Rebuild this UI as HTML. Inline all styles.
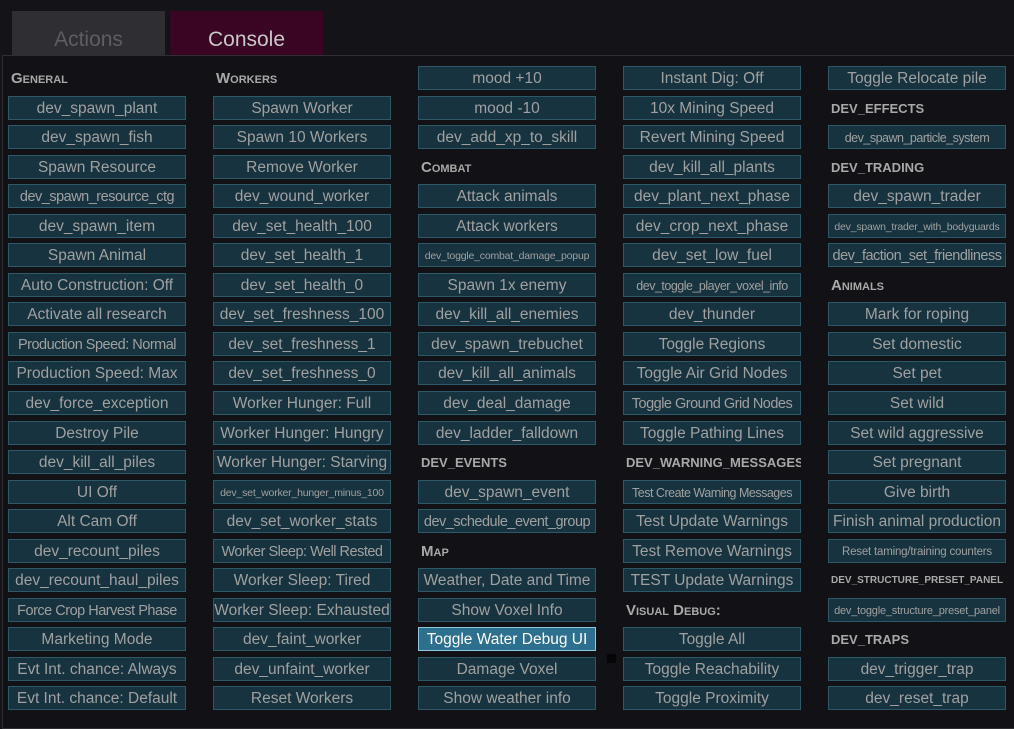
<!DOCTYPE html>
<html><head><meta charset="utf-8"><style>
body{margin:0;width:1014px;height:727px;background:#141418;font-family:"Liberation Sans",sans-serif;overflow:hidden;position:relative}
.tab{position:absolute;top:11px;height:45px;width:153px;text-align:center;font-size:21px;line-height:57px}
.t1{left:12px;background:#2f2f33;color:#5e5e62}
.t2{left:170px;background:#3a0522;color:#c8c8c8}
.panel{position:absolute;left:2px;top:55px;right:-2px;bottom:-2px;border:1px solid #2e2e33;background:#121216}
.grid{position:absolute;left:8px;top:66px;display:grid;grid-template-columns:repeat(5,178px);column-gap:27px;grid-template-rows:repeat(22,24px);row-gap:5.55px;grid-auto-flow:column}
.b{box-sizing:border-box;background:#17333f;border:1px solid #2c5868;color:#a0a0a0;font-size:15.5px;line-height:24px;text-align:center;white-space:nowrap;overflow:hidden}
.s{font-size:14.5px;letter-spacing:-0.5px}.t{font-size:10.5px;letter-spacing:-0.2px}
.h{color:#a8a8a8;font-weight:bold;font-size:15px;line-height:26px;padding-left:3px;font-variant:small-caps;white-space:nowrap;overflow:hidden}
.hs{font-size:13px}
.sel{background:#2c6f8e;border-color:#8cc8e0;color:#fff}
.sq{position:absolute;left:607px;top:654px;width:9px;height:9px;background:#050507}
</style></head><body>
<div class="tab t1">Actions</div><div class="tab t2">Console</div>
<div class="panel"></div>
<div class="sq"></div>
<div class="grid">
<div class="h">General</div>
<div class="b">dev_spawn_plant</div>
<div class="b">dev_spawn_fish</div>
<div class="b">Spawn Resource</div>
<div class="b s">dev_spawn_resource_ctg</div>
<div class="b">dev_spawn_item</div>
<div class="b">Spawn Animal</div>
<div class="b">Auto Construction: Off</div>
<div class="b">Activate all research</div>
<div class="b s">Production Speed: Normal</div>
<div class="b">Production Speed: Max</div>
<div class="b">dev_force_exception</div>
<div class="b">Destroy Pile</div>
<div class="b">dev_kill_all_piles</div>
<div class="b">UI Off</div>
<div class="b">Alt Cam Off</div>
<div class="b">dev_recount_piles</div>
<div class="b">dev_recount_haul_piles</div>
<div class="b s">Force Crop Harvest Phase</div>
<div class="b">Marketing Mode</div>
<div class="b">Evt Int. chance: Always</div>
<div class="b">Evt Int. chance: Default</div>

<div class="h">Workers</div>
<div class="b">Spawn Worker</div>
<div class="b">Spawn 10 Workers</div>
<div class="b">Remove Worker</div>
<div class="b">dev_wound_worker</div>
<div class="b">dev_set_health_100</div>
<div class="b">dev_set_health_1</div>
<div class="b">dev_set_health_0</div>
<div class="b">dev_set_freshness_100</div>
<div class="b">dev_set_freshness_1</div>
<div class="b">dev_set_freshness_0</div>
<div class="b">Worker Hunger: Full</div>
<div class="b">Worker Hunger: Hungry</div>
<div class="b">Worker Hunger: Starving</div>
<div class="b t">dev_set_worker_hunger_minus_100</div>
<div class="b">dev_set_worker_stats</div>
<div class="b s">Worker Sleep: Well Rested</div>
<div class="b">Worker Sleep: Tired</div>
<div class="b">Worker Sleep: Exhausted</div>
<div class="b">dev_faint_worker</div>
<div class="b">dev_unfaint_worker</div>
<div class="b">Reset Workers</div>

<div class="b">mood +10</div>
<div class="b">mood -10</div>
<div class="b">dev_add_xp_to_skill</div>
<div class="h">Combat</div>
<div class="b">Attack animals</div>
<div class="b">Attack workers</div>
<div class="b t">dev_toggle_combat_damage_popup</div>
<div class="b">Spawn 1x enemy</div>
<div class="b">dev_kill_all_enemies</div>
<div class="b">dev_spawn_trebuchet</div>
<div class="b">dev_kill_all_animals</div>
<div class="b">dev_deal_damage</div>
<div class="b">dev_ladder_falldown</div>
<div class="h hs">DEV_EVENTS</div>
<div class="b">dev_spawn_event</div>
<div class="b s">dev_schedule_event_group</div>
<div class="h">Map</div>
<div class="b">Weather, Date and Time</div>
<div class="b">Show Voxel Info</div>
<div class="b sel">Toggle Water Debug UI</div>
<div class="b">Damage Voxel</div>
<div class="b">Show weather info</div>

<div class="b">Instant Dig: Off</div>
<div class="b">10x Mining Speed</div>
<div class="b">Revert Mining Speed</div>
<div class="b">dev_kill_all_plants</div>
<div class="b">dev_plant_next_phase</div>
<div class="b">dev_crop_next_phase</div>
<div class="b">dev_set_low_fuel</div>
<div class="b s" style="font-size:12.5px">dev_toggle_player_voxel_info</div>
<div class="b">dev_thunder</div>
<div class="b">Toggle Regions</div>
<div class="b">Toggle Air Grid Nodes</div>
<div class="b s">Toggle Ground Grid Nodes</div>
<div class="b">Toggle Pathing Lines</div>
<div class="h hs">DEV_WARNING_MESSAGES</div>
<div class="b s" style="font-size:12.5px">Test Create Warning Messages</div>
<div class="b">Test Update Warnings</div>
<div class="b">Test Remove Warnings</div>
<div class="b">TEST Update Warnings</div>
<div class="h">Visual Debug:</div>
<div class="b">Toggle All</div>
<div class="b">Toggle Reachability</div>
<div class="b">Toggle Proximity</div>

<div class="b">Toggle Relocate pile</div>
<div class="h hs">DEV_EFFECTS</div>
<div class="b s" style="font-size:12.5px">dev_spawn_particle_system</div>
<div class="h hs">DEV_TRADING</div>
<div class="b">dev_spawn_trader</div>
<div class="b t">dev_spawn_trader_with_bodyguards</div>
<div class="b s">dev_faction_set_friendliness</div>
<div class="h">Animals</div>
<div class="b">Mark for roping</div>
<div class="b">Set domestic</div>
<div class="b">Set pet</div>
<div class="b">Set wild</div>
<div class="b">Set wild aggressive</div>
<div class="b">Set pregnant</div>
<div class="b">Give birth</div>
<div class="b">Finish animal production</div>
<div class="b t" style="font-size:11.5px">Reset taming/training counters</div>
<div class="h hs" style="font-size:10px">DEV_STRUCTURE_PRESET_PANEL</div>
<div class="b t" style="font-size:11px">dev_toggle_structure_preset_panel</div>
<div class="h hs">DEV_TRAPS</div>
<div class="b">dev_trigger_trap</div>
<div class="b">dev_reset_trap</div>
</div>
</body></html>
